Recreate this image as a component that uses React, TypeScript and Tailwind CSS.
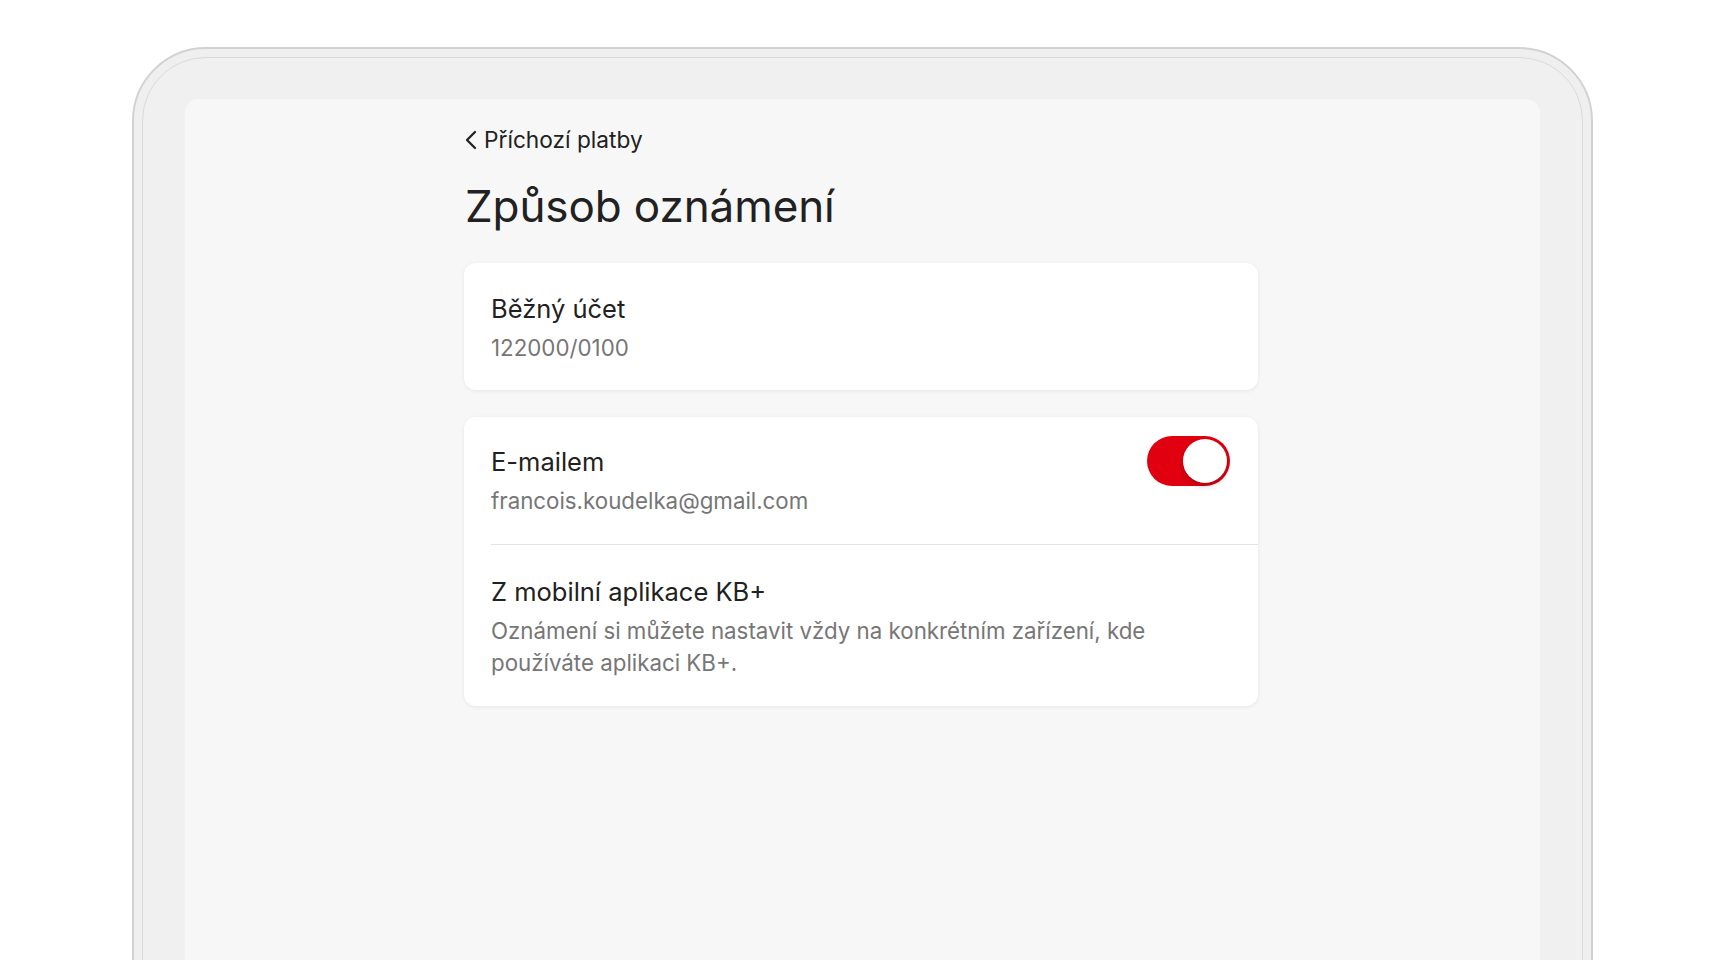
import { useState } from 'react';

function Toggle({ on, onChange }: { on: boolean; onChange: (v: boolean) => void }) {
  return (
    <button
      type="button"
      onClick={() => onChange(!on)}
      className={`relative h-[50px] w-[83px] shrink-0 rounded-full transition ${on ? 'bg-[#e1000f]' : 'bg-[#d9d9d9]'}`}
      aria-pressed={on}
    >
      <span
        className={`absolute top-[3px] h-[44px] w-[44px] rounded-full bg-white shadow-[0_3px_6px_rgba(0,0,0,0.22)] transition-all ${on ? 'left-[36px]' : 'left-[3px]'}`}
      />
    </button>
  );
}

export default function App() {
  const [emailOn, setEmailOn] = useState(true);

  return (
    <div className="h-[960px] w-full overflow-hidden bg-white font-['Inter','Noto_Sans',sans-serif] text-[#212121]">
      {/* tablet frame */}
      <div className="ml-[132px] mt-[47px] h-[1000px] w-[1461px] rounded-[74px] border-2 border-[#d2d2d2] bg-[#efefef] p-[8px]">
        <div className="h-full rounded-[64px] border border-[#dadada] bg-[#f0f0f0] px-[42px] pt-[41px]">
          <div className="h-full rounded-[14px] bg-[#f7f7f7] pt-[27px]">
            <div className="ml-[279px] w-[794px]">
              {/* Back link */}
              <button type="button" className="flex h-[28px] items-center gap-[7px] pl-[1px] text-[22.7px] font-normal leading-[28px] text-[#212121]">
                <svg width="12" height="20" viewBox="0 0 12 20" fill="none">
                  <path d="M10 2L2 10l8 8" stroke="#212121" strokeWidth="2.3" strokeLinecap="round" strokeLinejoin="round" />
                </svg>
                Příchozí platby
              </button>

              <h1 className="mt-[26px] pl-[1px] text-[44px] font-normal leading-[52px] tracking-[-0.1px] text-[#212121]">
                Způsob oznámení
              </h1>

              {/* Account card */}
              <div className="mt-[31px] rounded-[12px] bg-white px-[27px] pb-[26px] pt-[30px] shadow-[0_1px_4px_rgba(0,0,0,0.07)]">
                <p className="text-[25.5px] leading-[32px]">Běžný účet</p>
                <p className="mt-[7px] text-[22.3px] leading-[32px] text-[#767676]">122000/0100</p>
              </div>

              {/* Notification channels */}
              <div className="mt-[27px] rounded-[12px] bg-white shadow-[0_1px_4px_rgba(0,0,0,0.07)]">
                <div className="flex items-start justify-between pl-[27px] pr-[28px] pt-[19px]">
                  <div className="pt-[10px] pb-[27px]">
                    <p className="text-[25.5px] leading-[32px]">E-mailem</p>
                    <p className="mt-[7px] text-[22.3px] leading-[32px] text-[#767676]">francois.koudelka@gmail.com</p>
                  </div>
                  <Toggle on={emailOn} onChange={setEmailOn} />
                </div>
                <div className="ml-[27px] h-px bg-[#e3e3e3]" />
                <div className="px-[27px] pb-[27px] pt-[31px]">
                  <p className="text-[25.5px] leading-[32px]">Z mobilní aplikace KB+</p>
                  <p className="mt-[7px] max-w-[690px] text-[22.3px] leading-[32px] text-[#767676]">
                    Oznámení si můžete nastavit vždy na konkrétním zařízení, kde používáte aplikaci KB+.
                  </p>
                </div>
              </div>
            </div>
          </div>
        </div>
      </div>
    </div>
  );
}
